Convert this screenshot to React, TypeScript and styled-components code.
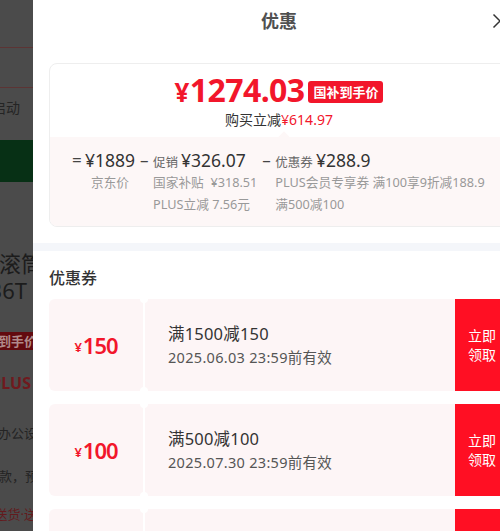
import React from "react";
import styled, { createGlobalStyle } from "styled-components";

const GlobalStyle = createGlobalStyle`
  html, body {
    margin: 0;
    padding: 0;
  }
  body {
    font-family: "Noto Sans", "Noto Sans CJK SC", sans-serif;
    background: #4b4b4b;
  }
  * {
    box-sizing: border-box;
  }
`;

const RED = "#f2162b";
const BTN_RED = "#ff0f23";
const PINK = "#fdf5f6";

const Screen = styled.div`
  position: relative;
  width: 500px;
  height: 531px;
  overflow: hidden;
  background: #4b4b4b;
`;

/* ~~~ dimmed product page behind the sheet ~~~ */
const Backdrop = styled.div`
  width: 33px;
  height: 531px;
  overflow: hidden;
  display: flex;
  flex-direction: column;
`;

const BgRule = styled.div<{ $top: number }>`
  margin-top: ${(p) => p.$top}px;
  height: 1px;
  background: #5c3434;
`;

const BgBar = styled.div<{ $top: number }>`
  margin-top: ${(p) => p.$top}px;
  height: 42px;
  background: #073015;
`;

const BgLine = styled.div<{ $top: number; $size: number; $lh: number; $color: string; $bold?: boolean }>`
  margin-top: ${(p) => p.$top}px;
  height: ${(p) => p.$lh}px;
  display: flex;
  justify-content: flex-end;
  align-items: center;
  white-space: nowrap;
  font-size: ${(p) => p.$size}px;
  font-weight: ${(p) => (p.$bold ? 700 : 400)};
  color: ${(p) => p.$color};
`;

const BgSpan = styled.span<{ $end: number; $bg?: string }>`
  margin-right: ${(p) => 33 - p.$end}px;
  background: ${(p) => p.$bg || "transparent"};
  padding: ${(p) => (p.$bg ? "0 3px" : "0")};
  line-height: ${(p) => (p.$bg ? "18px" : "inherit")};
`;

/* ~~~ sheet ~~~ */
const Sheet = styled.aside`
  position: absolute;
  top: 0;
  left: 33px;
  width: 492px;
  height: 531px;
  background: #fff;
  display: flex;
  flex-direction: column;
  overflow: hidden;
`;

const SheetHeader = styled.header`
  position: relative;
  height: 44px;
  flex-shrink: 0;
  display: flex;
  align-items: center;
  justify-content: center;
`;

const SheetTitle = styled.h2`
  margin: -4px 0 0;
  font-size: 18px;
  font-weight: 700;
  color: #505050;
`;

const CloseBtn = styled.button`
  position: absolute;
  right: 17px;
  top: 13px;
  width: 16px;
  height: 16px;
  padding: 0;
  border: 0;
  background: none;
  display: flex;
`;

const PriceSection = styled.section`
  padding: 19px 16px 16px;
`;

const PriceCard = styled.div`
  border: 1px solid #eeeeee;
  border-radius: 8px;
  overflow: hidden;
`;

const CardTop = styled.div`
  height: 73px;
  padding-top: 9px;
  display: flex;
  flex-direction: column;
  align-items: center;
`;

const PriceRow = styled.div`
  display: flex;
  align-items: center;
  gap: 4px;
  height: 36px;
`;

const BigPrice = styled.span`
  color: ${RED};
  font-weight: 700;
  font-size: 32px;
  letter-spacing: -0.6px;
  line-height: 36px;

  small {
    font-size: 26px;
    margin-right: 1px;
  }
`;

const PriceTag = styled.span`
  background: ${RED};
  color: #fff;
  font-size: 13px;
  font-weight: 700;
  line-height: 22px;
  padding: 0 5px;
  border-radius: 3px;
  margin-top: 2px;
`;

const SaveLine = styled.div`
  margin-top: 1px;
  font-size: 14px;
  line-height: 20px;
  color: #333;

  em {
    font-style: normal;
    color: ${RED};
  }
`;

const CardBottom = styled.div`
  position: relative;
  background: #fdf7f7;
  padding: 12px 0 11px 22px;

  &::before {
    content: "";
    position: absolute;
    top: -4px;
    left: 230px;
    width: 8px;
    height: 8px;
    background: #fdf7f7;
    transform: rotate(45deg);
  }
`;

const Breakdown = styled.div`
  display: flex;
  align-items: flex-start;
  gap: 5px;
`;

const Item = styled.div`
  display: flex;
  align-items: flex-start;
`;

const Op = styled.span`
  width: 13px;
  flex-shrink: 0;
  font-size: 17px;
  line-height: 22px;
  color: #444;
`;

const Block = styled.div<{ $center?: boolean }>`
  display: flex;
  flex-direction: column;
  align-items: ${(p) => (p.$center ? "center" : "flex-start")};
`;

const HeadLine = styled.div`
  display: flex;
  align-items: baseline;
  white-space: nowrap;
`;

const Label = styled.span`
  font-size: 12.5px;
  color: #666;
  margin-right: 3px;
`;

const Amount = styled.span`
  font-size: 17.5px;
  line-height: 22px;
  color: #333;
`;

const Detail = styled.div`
  font-size: 12.7px;
  line-height: 22px;
  color: #999;
  white-space: pre;
`;

const Band = styled.div`
  height: 8px;
  flex-shrink: 0;
  background: #f4f6fa;
`;

const CouponSection = styled.section`
  padding: 16px 16px 0;
  display: flex;
  flex-direction: column;
  gap: 13px;
`;

const SectionTitle = styled.h3`
  margin: 0 0 -3px;
  font-size: 16px;
  line-height: 22px;
  font-weight: 500;
  color: #333;
`;

const Coupon = styled.div`
  display: flex;
  height: 92px;
  flex-shrink: 0;
`;

const CouponValue = styled.div`
  width: 94px;
  background: ${PINK};
  border-radius: 6px 2px 2px 6px;
  display: flex;
  align-items: center;
  justify-content: center;
  color: ${RED};

  small {
    font-size: 13px;
    font-weight: 600;
    margin-right: 1px;
    margin-top: 3px;
  }
  b {
    font-size: 22px;
    font-weight: 600;
    letter-spacing: -1px;
  }
`;

const Seam = styled.div`
  position: relative;
  width: 2px;

  &::before,
  &::after {
    content: "";
    position: absolute;
    left: -3px;
    width: 8px;
    height: 8px;
    border-radius: 50%;
    background: #fff;
  }
  &::before {
    top: -4px;
  }
  &::after {
    bottom: -4px;
  }
`;

const CouponBody = styled.div`
  flex: 1;
  background: ${PINK};
  border-radius: 2px 0 0 2px;
  padding-left: 23px;
  display: flex;
  flex-direction: column;
  justify-content: center;
`;

const CouponRule = styled.div`
  font-size: 16.5px;
  line-height: 24px;
  letter-spacing: 0.2px;
  color: #333;
`;

const CouponDate = styled.div`
  font-size: 14.5px;
  line-height: 22px;
  letter-spacing: 0.3px;
  color: #555;
`;

const ClaimBtn = styled.button`
  width: 54px;
  border: 0;
  background: ${BTN_RED};
  color: #fff;
  font-family: inherit;
  font-size: 14px;
  line-height: 19px;
  padding: 0;
`;

const coupons = [
  { amount: "150", rule: "满1500减150", date: "2025.06.03 23:59前有效" },
  { amount: "100", rule: "满500减100", date: "2025.07.30 23:59前有效" },
  { amount: "50", rule: "满300减50", date: "2025.07.30 23:59前有效" },
];

export default function App() {
  return (
    <>
      <GlobalStyle />
      <Screen>
        <Backdrop>
          <BgRule $top={47} />
          <BgRule $top={39} />
          <BgLine $top={9} $size={14} $lh={20} $color="#242424">
            <BgSpan $end={20}>一键启动</BgSpan>
          </BgLine>
          <BgBar $top={23} />
          <BgLine $top={66} $size={22} $lh={28} $color="#1c1c1c">
            <BgSpan $end={43}>滚筒</BgSpan>
          </BgLine>
          <BgLine $top={0} $size={22} $lh={28} $color="#1c1c1c">
            <BgSpan $end={27}>B36T</BgSpan>
          </BgLine>
          <BgLine $top={28} $size={13} $lh={18} $color="#b08a8a" $bold>
            <BgSpan $end={40} $bg="#620a0f">到手价</BgSpan>
          </BgLine>
          <BgLine $top={22} $size={16} $lh={22} $color="#6f1a1e" $bold>
            <BgSpan $end={31}>PLUS</BgSpan>
          </BgLine>
          <BgLine $top={29} $size={13} $lh={18} $color="#242424">
            <BgSpan $end={37}>办公设</BgSpan>
          </BgLine>
          <BgLine $top={25} $size={13} $lh={18} $color="#242424">
            <BgSpan $end={38}>款，预</BgSpan>
          </BgLine>
          <BgLine $top={20} $size={13} $lh={18} $color="#631a1d">
            <BgSpan $end={37}>送货·送</BgSpan>
          </BgLine>
        </Backdrop>

        <Sheet>
          <SheetHeader>
            <SheetTitle>优惠</SheetTitle>
            <CloseBtn aria-label="关闭">
              <svg width="16" height="16" viewBox="0 0 16 16">
                <path d="M1.5 1.5L14.5 14.5M14.5 1.5L1.5 14.5" stroke="#333" strokeWidth="1.5" fill="none" />
              </svg>
            </CloseBtn>
          </SheetHeader>

          <PriceSection>
            <PriceCard>
              <CardTop>
                <PriceRow>
                  <BigPrice>
                    <small>¥</small>1274.03
                  </BigPrice>
                  <PriceTag>国补到手价</PriceTag>
                </PriceRow>
                <SaveLine>
                  购买立减<em>¥614.97</em>
                </SaveLine>
              </CardTop>
              <CardBottom>
                <Breakdown>
                  <Item>
                    <Op>=</Op>
                    <Block $center>
                      <Amount>¥1889</Amount>
                      <Detail>京东价</Detail>
                    </Block>
                  </Item>
                  <Item>
                    <Op>–</Op>
                    <Block>
                      <HeadLine>
                        <Label>促销</Label>
                        <Amount>¥326.07</Amount>
                      </HeadLine>
                      <Detail>{"国家补贴  ¥318.51"}</Detail>
                      <Detail>PLUS立减 7.56元</Detail>
                    </Block>
                  </Item>
                  <Item>
                    <Op>–</Op>
                    <Block>
                      <HeadLine>
                        <Label>优惠券</Label>
                        <Amount>¥288.9</Amount>
                      </HeadLine>
                      <Detail>PLUS会员专享券 满100享9折减188.9</Detail>
                      <Detail>满500减100</Detail>
                    </Block>
                  </Item>
                </Breakdown>
              </CardBottom>
            </PriceCard>
          </PriceSection>

          <Band />

          <CouponSection>
            <SectionTitle>优惠券</SectionTitle>
            {coupons.map((c) => (
              <Coupon key={c.rule}>
                <CouponValue>
                  <small>¥</small>
                  <b>{c.amount}</b>
                </CouponValue>
                <Seam />
                <CouponBody>
                  <CouponRule>{c.rule}</CouponRule>
                  <CouponDate>{c.date}</CouponDate>
                </CouponBody>
                <ClaimBtn>
                  立即
                  <br />
                  领取
                </ClaimBtn>
              </Coupon>
            ))}
          </CouponSection>
        </Sheet>
      </Screen>
    </>
  );
}
